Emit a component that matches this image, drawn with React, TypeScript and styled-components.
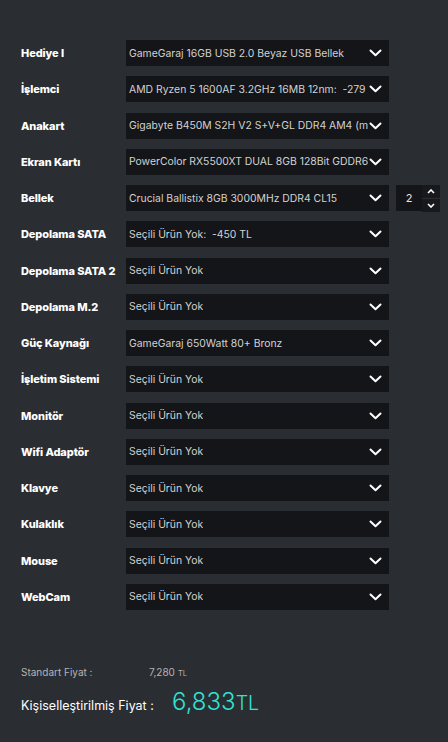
import React from "react";
import styled, { createGlobalStyle } from "styled-components";

const Global = createGlobalStyle`
  html, body { margin: 0; padding: 0; background: #2a2d32; }
  body { font-family: Inter, "Noto Sans", sans-serif; }
  * { box-sizing: border-box; }
`;

const Page = styled.div`
  width: 448px;
  min-height: 742px;
  background: #2a2d32;
  padding: 40px 0 0 21px;
`;

const Form = styled.div`
  display: grid;
  grid-template-columns: 105px 263px 7px 26px 18px;
  grid-auto-rows: 26px;
  row-gap: 10.27px;
  align-items: center;
`;

const Label = styled.div`
  grid-column: 1;
  color: #ffffff;
  font-size: 11px;
  font-weight: 800;
  letter-spacing: -0.1px;
  white-space: nowrap;
`;

const Select = styled.div`
  grid-column: 2;
  height: 26px;
  background: #141518;
  display: flex;
  align-items: center;
  position: relative;
  padding: 0 21px 0 3px;
  overflow: hidden;
`;

const SelectText = styled.span`
  color: #d2d2d2;
  font-size: 10.4px;
  white-space: pre;
  overflow: hidden;
`;

const Chevron = styled.svg`
  position: absolute;
  right: 7px;
  top: 9px;
  width: 13px;
  height: 8px;
`;

const Qty = styled.div`
  grid-column: 4;
  height: 26px;
  background: #141518;
  color: #e6e6e6;
  font-size: 11px;
  display: flex;
  align-items: center;
  justify-content: center;
`;

const Spinner = styled.div`
  grid-column: 5;
  height: 27px;
  display: grid;
  grid-template-rows: 1fr 1fr;
  row-gap: 1px;
`;

const SpinBtn = styled.div`
  background: #18191c;
  display: flex;
  align-items: center;
  justify-content: center;
`;

const Prices = styled.div`
  margin-top: 56px;
  display: flex;
  flex-direction: column;
`;

const StdRow = styled.div`
  display: flex;
  align-items: baseline;
  height: 14px;
  color: #b4b4b4;
  font-size: 10px;
`;

const StdLabel = styled.span`
  width: 128px;
`;

const Small = styled.span`
  font-size: 7.5px;
  margin-left: 3px;
`;

const FinalRow = styled.div`
  display: flex;
  align-items: baseline;
  margin-top: 7px;
`;

const FinalLabel = styled.span`
  color: #ffffff;
  font-size: 12.5px;
  width: 151px;
`;

const FinalValue = styled.span`
  color: #2fe3d3;
  font-size: 24px;
  font-weight: 300;
`;

const FinalUnit = styled.span`
  color: #2fe3d3;
  font-size: 19.5px;
  font-weight: 300;
`;

const ChevronIcon = () => (
  <Chevron viewBox="0 0 13 8">
    <path d="M1.5 1.5 L6.5 6.3 L11.5 1.5" fill="none" stroke="#fff" strokeWidth="2" strokeLinecap="round" strokeLinejoin="round" />
  </Chevron>
);

const rows: { label: string; value: string; qty?: boolean }[] = [
  { label: "Hediye I", value: "GameGaraj 16GB USB 2.0 Beyaz USB Bellek" },
  { label: "İşlemci", value: "AMD Ryzen 5 1600AF 3.2GHz 16MB 12nm:  -279 TL" },
  { label: "Anakart", value: "Gigabyte B450M S2H V2 S+V+GL DDR4 AM4 (mATX)" },
  { label: "Ekran Kartı", value: "PowerColor RX5500XT DUAL 8GB 128Bit GDDR6" },
  { label: "Bellek", value: "Crucial Ballistix 8GB 3000MHz DDR4 CL15", qty: true },
  { label: "Depolama SATA", value: "Seçili Ürün Yok:  -450 TL" },
  { label: "Depolama SATA 2", value: "Seçili Ürün Yok" },
  { label: "Depolama M.2", value: "Seçili Ürün Yok" },
  { label: "Güç Kaynağı", value: "GameGaraj 650Watt 80+ Bronz" },
  { label: "İşletim Sistemi", value: "Seçili Ürün Yok" },
  { label: "Monitör", value: "Seçili Ürün Yok" },
  { label: "Wifi Adaptör", value: "Seçili Ürün Yok" },
  { label: "Klavye", value: "Seçili Ürün Yok" },
  { label: "Kulaklık", value: "Seçili Ürün Yok" },
  { label: "Mouse", value: "Seçili Ürün Yok" },
  { label: "WebCam", value: "Seçili Ürün Yok" },
];

export default function App() {
  return (
    <>
      <Global />
      <Page>
        <Form>
          {rows.map((r, i) => (
            <React.Fragment key={i}>
              <Label style={{ gridRow: i + 1 }}>{r.label}</Label>
              <Select style={{ gridRow: i + 1 }}>
                <SelectText>{r.value}</SelectText>
                <ChevronIcon />
              </Select>
              {r.qty && (
                <>
                  <Qty style={{ gridRow: i + 1 }}>2</Qty>
                  <Spinner style={{ gridRow: i + 1 }}>
                    <SpinBtn>
                      <svg width="8" height="5" viewBox="0 0 8 5">
                        <path d="M1 4 L4 1 L7 4" fill="none" stroke="#fff" strokeWidth="1.6" />
                      </svg>
                    </SpinBtn>
                    <SpinBtn>
                      <svg width="8" height="5" viewBox="0 0 8 5">
                        <path d="M1 1 L4 4 L7 1" fill="none" stroke="#fff" strokeWidth="1.6" />
                      </svg>
                    </SpinBtn>
                  </Spinner>
                </>
              )}
            </React.Fragment>
          ))}
        </Form>
        <Prices>
          <StdRow>
            <StdLabel>Standart Fiyat :</StdLabel>
            <span>
              7,280<Small>TL</Small>
            </span>
          </StdRow>
          <FinalRow>
            <FinalLabel>Kişiselleştirilmiş Fiyat :</FinalLabel>
            <FinalValue>6,833</FinalValue>
            <FinalUnit>TL</FinalUnit>
          </FinalRow>
        </Prices>
      </Page>
    </>
  );
}
